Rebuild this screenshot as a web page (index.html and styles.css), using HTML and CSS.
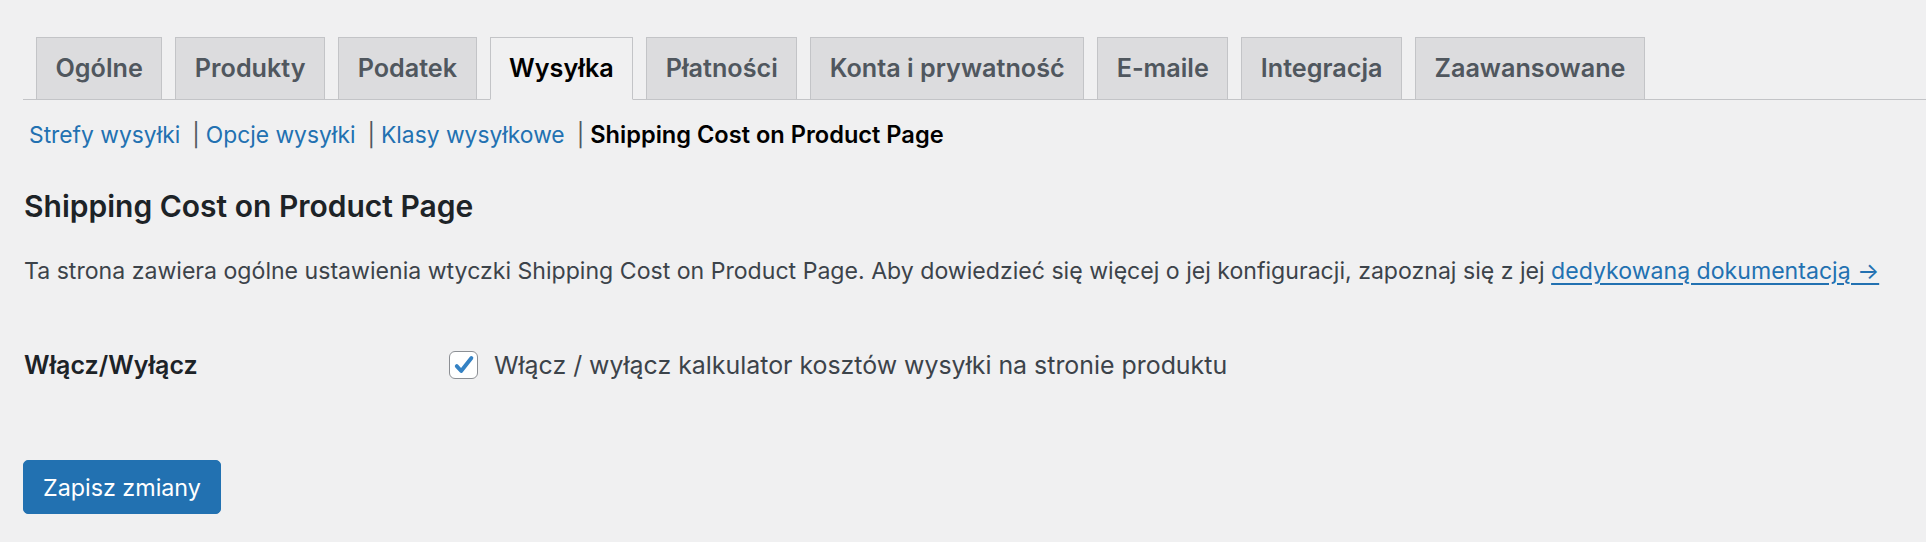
FILE: index.html
```html
<!DOCTYPE html>
<html lang="pl">
<head>
  <meta charset="UTF-8" />
  <title>WooCommerce - Wysyłka</title>
  <link rel="stylesheet" href="styles.css">
</head>
<body>

  <div class="wrap">

    <!-- Tabs -->
    <nav class="nav-tabs">
      <a href="#" class="nav-tab">Ogólne</a>
      <a href="#" class="nav-tab">Produkty</a>
      <a href="#" class="nav-tab">Podatek</a>
      <a href="#" class="nav-tab active">Wysyłka</a>
      <a href="#" class="nav-tab">Płatności</a>
      <a href="#" class="nav-tab">Konta i prywatność</a>
      <a href="#" class="nav-tab">E-maile</a>
      <a href="#" class="nav-tab">Integracja</a>
      <a href="#" class="nav-tab">Zaawansowane</a>
    </nav>

    <!-- Sections -->
    <ul class="subsubsub">
      <li><a href="#">Strefy wysyłki</a><span class="sep">|</span></li>
      <li><a href="#">Opcje wysyłki</a><span class="sep">|</span></li>
      <li><a href="#">Klasy wysyłkowe</a><span class="sep">|</span></li>
      <li><span class="current">Shipping Cost on Product Page</span></li>
    </ul>

    <h2>Shipping Cost on Product Page</h2>

    <p class="intro">
      Ta strona zawiera ogólne ustawienia wtyczki Shipping Cost on Product Page. Aby dowiedzieć się więcej o jej konfiguracji, zapoznaj się z jej
      <a href="#">dedykowaną dokumentacją →</a>
    </p>

    <div class="form-row">
      <div class="form-label">Włącz/Wyłącz</div>
      <label class="form-field">
        <span class="checkbox">
          <svg viewBox="0 0 28 28" width="28" height="28">
            <path d="M7 15.2 L11.6 20.2 L22.2 6.8" fill="none" stroke="#3582c4" stroke-width="4" stroke-linecap="round" stroke-linejoin="round"/>
          </svg>
        </span>
        Włącz / wyłącz kalkulator kosztów wysyłki na stronie produktu
      </label>
    </div>

    <button class="save-btn">Zapisz zmiany</button>

  </div>

</body>
</html>
```

FILE: styles.css
```css
body {
  margin: 0;
  background-color: #f0f0f1;
  font-family: Inter, "Noto Sans", sans-serif;
  color: #3c434a;
}

.wrap {
  padding: 37px 0 0 23px;
}

.nav-tabs {
  display: flex;
  align-items: flex-end;
  border-bottom: 1px solid #c3c4c7;
  padding-left: 0;
}

.nav-tab {
  height: 63px;
  box-sizing: border-box;
  margin-left: 13px;
  margin-bottom: -1px;
  padding: 0 18.5px;
  border: 1px solid #c3c4c7;
  background-color: #dcdcde;
  color: #50575e;
  font-size: 25.2px;
  font-weight: 600;
  line-height: 61px;
  text-decoration: none;
  white-space: nowrap;
}

.nav-tab.active {
  background-color: #f0f0f1;
  border-bottom-color: #f0f0f1;
  color: #000;
}

.subsubsub {
  list-style: none;
  margin: 20px 0 0 6px;
  padding: 0;
  display: flex;
  align-items: baseline;
  font-size: 22.8px;
  line-height: 30px;
}

.subsubsub a {
  color: #2271b1;
  text-decoration: none;
}

.subsubsub .sep {
  color: #50575e;
  margin: 0 6px 0 12px;
}

.subsubsub .current {
  color: #000;
  font-size: 23.6px;
  font-weight: 600;
}

h2 {
  margin: 37px 0 0 1px;
  font-size: 30px;
  line-height: 38px;
  font-weight: 600;
  color: #1d2327;
}

.intro {
  margin: 31px 0 0 1px;
  font-size: 23.1px;
  line-height: 30px;
}

.intro a {
  color: #2271b1;
  text-decoration: underline;
  text-underline-offset: 4px;
}

.form-row {
  display: flex;
  align-items: center;
  height: 56px;
  margin-top: 51px;
}

.form-label {
  width: 425px;
  padding-left: 1px;
  font-size: 25px;
  font-weight: 600;
  color: #1d2327;
}

.form-field {
  display: flex;
  align-items: center;
  font-size: 24.9px;
  color: #3c434a;
}

.checkbox {
  width: 29px;
  height: 28px;
  box-sizing: border-box;
  margin-right: 16px;
  border: 1px solid #8c8f94;
  border-radius: 6px;
  background-color: #fff;
  display: flex;
  align-items: center;
  justify-content: center;
}

.save-btn {
  display: block;
  margin-top: 67px;
  height: 54px;
  padding: 0 19px;
  border: 1px solid #2271b1;
  border-radius: 5px;
  background-color: #2271b1;
  color: #fff;
  font-family: Inter, "Noto Sans", sans-serif;
  font-size: 23.3px;
  cursor: pointer;
}
```
